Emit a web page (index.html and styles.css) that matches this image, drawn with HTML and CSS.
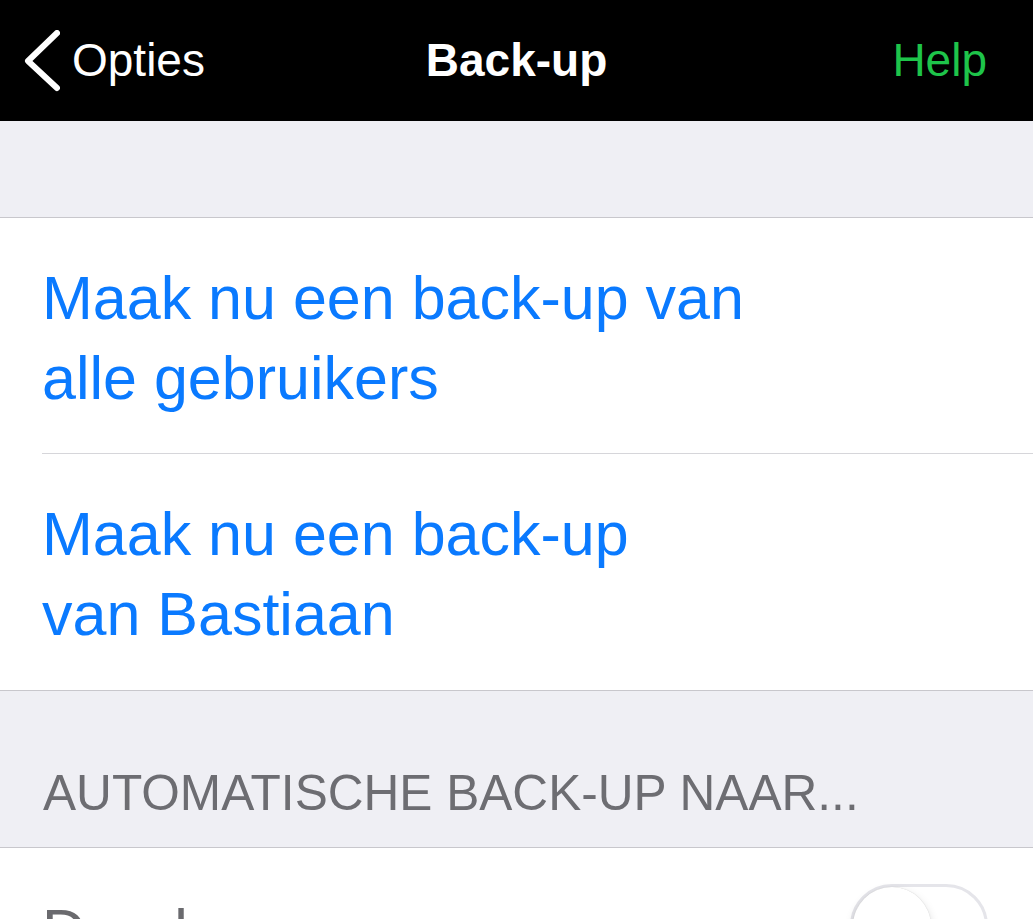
FILE: index.html
```html
<!DOCTYPE html>
<html lang="nl">
<head>
<meta charset="utf-8">
<title>Back-up</title>
<link rel="stylesheet" href="styles.css">
</head>
<body>
<header class="navbar">
  <div class="nav-left">
    <svg class="chevron" viewBox="0 0 36 62" width="36" height="62" aria-hidden="true">
      <path d="M33 3 L4 31 L33 58" fill="none" stroke="#fff" stroke-width="6" stroke-linecap="round" stroke-linejoin="round"/>
    </svg>
    <span class="nav-back">Opties</span>
  </div>
  <div class="nav-title">Back-up</div>
  <div class="nav-right"><span class="nav-help">Help</span></div>
</header>
<main>
  <div class="spacer"></div>
  <section class="group">
    <div class="cell action">Maak nu een back-up van<br>alle gebruikers</div>
    <div class="cell action last">Maak nu een back-up<br>van Bastiaan</div>
  </section>
  <div class="section-header">AUTOMATISCHE BACK-UP NAAR...</div>
  <section class="group">
    <div class="cell toggle-cell">
      <span class="label">Dropbox</span>
      <span class="switch"><span class="knob"></span></span>
    </div>
  </section>
</main>
</body>
</html>
```
FILE: styles.css
```css
html, body {
  margin: 0;
  padding: 0;
}
body {
  background: #efeff4;
  font-family: "Liberation Sans", Arial, sans-serif;
  width: 1033px;
  height: 919px;
  overflow: hidden;
}
.navbar {
  height: 121px;
  background: #000;
  display: grid;
  grid-template-columns: 1fr auto 1fr;
  align-items: start;
  padding-top: 37px;
  box-sizing: border-box;
  font-size: 46px;
  line-height: 46px;
  color: #fff;
}
.nav-left {
  display: flex;
  align-items: flex-start;
  padding-left: 24px;
}
.chevron {
  margin-top: -7px;
  margin-right: 12px;
  display: block;
}
.nav-title {
  font-weight: bold;
}
.nav-right {
  display: flex;
  justify-content: flex-end;
  padding-right: 46px;
}
.nav-help {
  color: #1ec44a;
}
.spacer {
  height: 96px;
}
.group {
  background: #fff;
  border-top: 1px solid #c8c7cc;
  border-bottom: 1px solid #c8c7cc;
}
.cell {
  margin-left: 42px;
  font-size: 61px;
  line-height: 80px;
}
.action {
  color: #0a7aff;
  padding: 40px 0 35px;
  border-bottom: 1.5px solid #d6d6da;
}
.action.last {
  border-bottom: none;
  padding-bottom: 36px;
}
.section-header {
  height: 156px;
  box-sizing: border-box;
  display: flex;
  align-items: flex-end;
  padding: 0 0 30px 43px;
  font-size: 49.6px;
  line-height: 48px;
  color: #6d6d72;
}
.toggle-cell {
  display: flex;
  justify-content: space-between;
  align-items: flex-start;
  padding-top: 43px;
  padding-right: 45px;
  height: 200px;
  color: #6a6a6e;
}
.switch {
  position: relative;
  margin-top: -7px;
  width: 138px;
  height: 84px;
  border-radius: 42px;
  box-sizing: border-box;
  border: 3px solid #e5e5ea;
  background: #fff;
}
.knob {
  position: absolute;
  left: 0;
  top: 0;
  width: 78px;
  height: 78px;
  border-radius: 50%;
  background: #fff;
  box-shadow: 0 4px 10px rgba(0,0,0,0.15), 0 0 1px rgba(0,0,0,0.2);
}
```
